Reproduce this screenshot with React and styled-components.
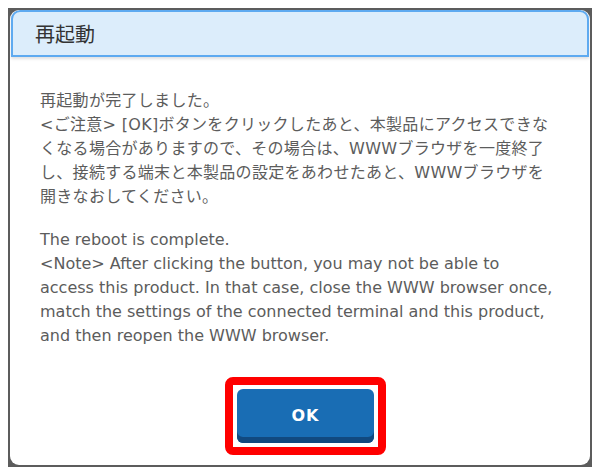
import React from 'react'
import styled, { createGlobalStyle } from 'styled-components'

const GlobalStyle = createGlobalStyle`
  html, body {
    margin: 0;
    padding: 0;
    background: #ffffff;
  }
  body {
    font-family: "DejaVu Sans", "Noto Sans CJK JP", sans-serif;
  }
`

const jaLines = [
    '再起動が完了しました。',
    '<ご注意> [OK]ボタンをクリックしたあと、本製品にアクセスできな',
    'くなる場合がありますので、その場合は、WWWブラウザを一度終了',
    'し、接続する端末と本製品の設定をあわせたあと、WWWブラウザを',
    '開きなおしてください。',
]

const enLines = [
    'The reboot is complete.',
    '<Note> After clicking the button, you may not be able to',
    'access this product. In that case, close the WWW browser once,',
    'match the settings of the connected terminal and this product,',
    'and then reopen the WWW browser.',
]

const App = () => {
    return (
        <>
            <GlobalStyle />
            <Page>
                <Frame>
                    <Panel>
                        <Header>
                            <Title>再起動</Title>
                        </Header>
                        <Body>
                            <Message lang="ja">
                                {jaLines.map((line) => (
                                    <Line key={line}>{line}</Line>
                                ))}
                            </Message>
                            <Message lang="en" $en>
                                {enLines.map((line) => (
                                    <Line key={line}>{line}</Line>
                                ))}
                            </Message>
                        </Body>
                        <Footer>
                            {/* red highlight round the button */}
                            <Highlight>
                                <OkButton type="button">OK</OkButton>
                            </Highlight>
                        </Footer>
                    </Panel>
                </Frame>
            </Page>
        </>
    )
}

const Page = styled.div`
padding: 8px;
width: 600px;
height: 476px;
box-sizing: border-box;
`

const Frame = styled.div`
width: 584px;
height: 459px;
box-sizing: border-box;
background: #5c5c5c;
padding: 2px;
`

const Panel = styled.div`
height: 100%;
background: #ffffff;
border-radius: 9px;
display: flex;
flex-direction: column;
overflow: hidden;
`

const Header = styled.div`
height: 47px;
box-sizing: border-box;
margin: 0 1px;
background: #dcedfb;
border: 2px solid #5eaaf0;
border-radius: 9px 9px 0 0;
display: flex;
align-items: center;
padding-left: 22px;
box-shadow: 0 2px 3px rgba(0, 0, 0, 0.12);
position: relative;
`

const Title = styled.h1`
margin: 0;
font-family: "Noto Sans CJK JP", sans-serif;
font-weight: 400;
font-size: 20px;
color: #333333;
`

const Body = styled.div`
flex: 1;
padding: 32px 0 0 30px;
color: #5c5c5c;
`

const Message = styled.div`
font-family: ${({ $en }) => ($en ? '"DejaVu Sans", sans-serif' : '"DejaVu Sans", "Noto Sans CJK JP", sans-serif')};
font-size: 16px;
letter-spacing: ${({ $en }) => ($en ? '0' : '0.3px')};
line-height: 24px;
margin-top: ${({ $en }) => ($en ? '19px' : '0')};
`

const Line = styled.div`
white-space: nowrap;
`

const Footer = styled.div`
display: flex;
justify-content: center;
padding: 0 0 10px 11px;
`

const Highlight = styled.div`
border: 8px solid #ff0000;
border-radius: 8px;
padding: 4px;
background: #ffffff;
`

const OkButton = styled.button`
display: flex;
align-items: center;
justify-content: center;
width: 137px;
height: 54px;
box-sizing: border-box;
border: none;
border-radius: 6px;
background: #196db4;
box-shadow: inset 0 -6px 0 #11497f;
padding: 0 0 2px 0;
color: #ffffff;
font-family: "DejaVu Sans", sans-serif;
font-weight: 700;
font-size: 16px;
letter-spacing: 1px;
cursor: pointer;
`

export default App
